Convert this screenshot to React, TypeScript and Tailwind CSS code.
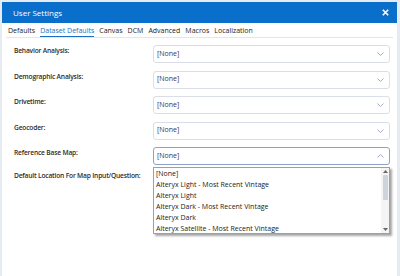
import { useState } from "react";

const tabs = ["Defaults", "Dataset Defaults", "Canvas", "DCM", "Advanced", "Macros", "Localization"];

const fields = [
  "Behavior Analysis:",
  "Demographic Analysis:",
  "Drivetime:",
  "Geocoder:",
  "Reference Base Map:",
];

const options = [
  "[None]",
  "Alteryx Light - Most Recent Vintage",
  "Alteryx Light",
  "Alteryx Dark - Most Recent Vintage",
  "Alteryx Dark",
  "Alteryx Satellite - Most Recent Vintage",
];

const labelCls = "w-[151px] pl-[12px] text-[6.7px] tracking-[-0.2px] leading-[11px] font-semibold text-[#2c2c2c] whitespace-nowrap";

const Chevron = ({ up }: { up?: boolean }) => (
  <svg width="7" height="4" viewBox="0 0 7 4" className="text-[#9aa3b5]">
    <path d={up ? "M0.5 3.5 L3.5 0.5 L6.5 3.5" : "M0.5 0.5 L3.5 3.5 L6.5 0.5"} fill="none" stroke="currentColor" strokeWidth="0.9" />
  </svg>
);

const Select = ({ open }: { open?: boolean }) => (
  <div
    className={
      "w-[237px] h-[18px] rounded-[3px] border bg-white flex items-center justify-between pl-[3px] pr-[5px] " +
      (open ? "border-[#8ea2c4]" : "border-[#d9dee8]")
    }
  >
    <span className="text-[7px] text-[#3a3550]">[None]</span>
    <Chevron up={open} />
  </div>
);

export default function App() {
  const [tab] = useState(1);

  return (
    <div className="w-[400px] h-[276px] bg-[#e6eaf1] pt-[2px] pl-[2px] pr-[3px] overflow-hidden" style={{ fontFamily: "'Open Sans', 'Noto Sans', sans-serif" }}>
      <div className="relative h-full bg-white">
        <div className="h-[21px] bg-[#0a6ecb] flex items-center justify-between pl-[11px] pr-[8px]">
          <span className="text-[8px] text-white">User Settings</span>
          <svg width="7" height="7" viewBox="0 0 7 7">
            <path d="M0.8 0.8 L6.2 6.2 M6.2 0.8 L0.8 6.2" stroke="white" strokeWidth="1.6" />
          </svg>
        </div>

        <div className="mx-[4px] flex items-end gap-[5px] h-[15px] border-b border-[#e3e6ec] pl-[2px]">
          {tabs.map((t, i) => (
            <span
              key={t}
              className={
                "text-[7px] leading-[10px] border-b " +
                (i === tab ? "text-[#1a6fc4] border-[#1a6fc4]" : "text-[#222] border-transparent")
              }
            >
              {t}
            </span>
          ))}
        </div>

        <div className="flex flex-col gap-[7.5px] pt-[7px]">
          {fields.map((f, i) => (
            <div key={f} className="flex items-start">
              <span className={labelCls}>{f}</span>
              <Select open={i === 4} />
            </div>
          ))}
          <div className="flex items-start -mt-[3px]">
            <span className={labelCls}>Default Location For Map Input/Question:</span>
          </div>
        </div>

        <div className="absolute left-[151px] top-[165px] w-[237px] h-[67px] bg-white border border-[#a0a0a0] shadow-[2px_2px_2px_rgba(0,0,0,0.35)] flex">
          <div className="flex-1 flex flex-col pl-[2px]">
            {options.map((o) => (
              <span key={o} className="text-[7px] leading-[11px] text-[#222] whitespace-nowrap">{o}</span>
            ))}
          </div>
          <div className="w-[8px] flex flex-col items-center bg-[#f4f4f4] py-[2px]">
            <svg width="5" height="3" viewBox="0 0 5 3"><path d="M0 3 L2.5 0 L5 3 Z" fill="#666" /></svg>
            <div className="mt-[2px] w-[5px] h-[25px] bg-[#cfd3dc] rounded-[1px]" />
            <div className="flex-1" />
            <svg width="5" height="3" viewBox="0 0 5 3"><path d="M0 0 L2.5 3 L5 0 Z" fill="#666" /></svg>
          </div>
        </div>
      </div>
    </div>
  );
}
